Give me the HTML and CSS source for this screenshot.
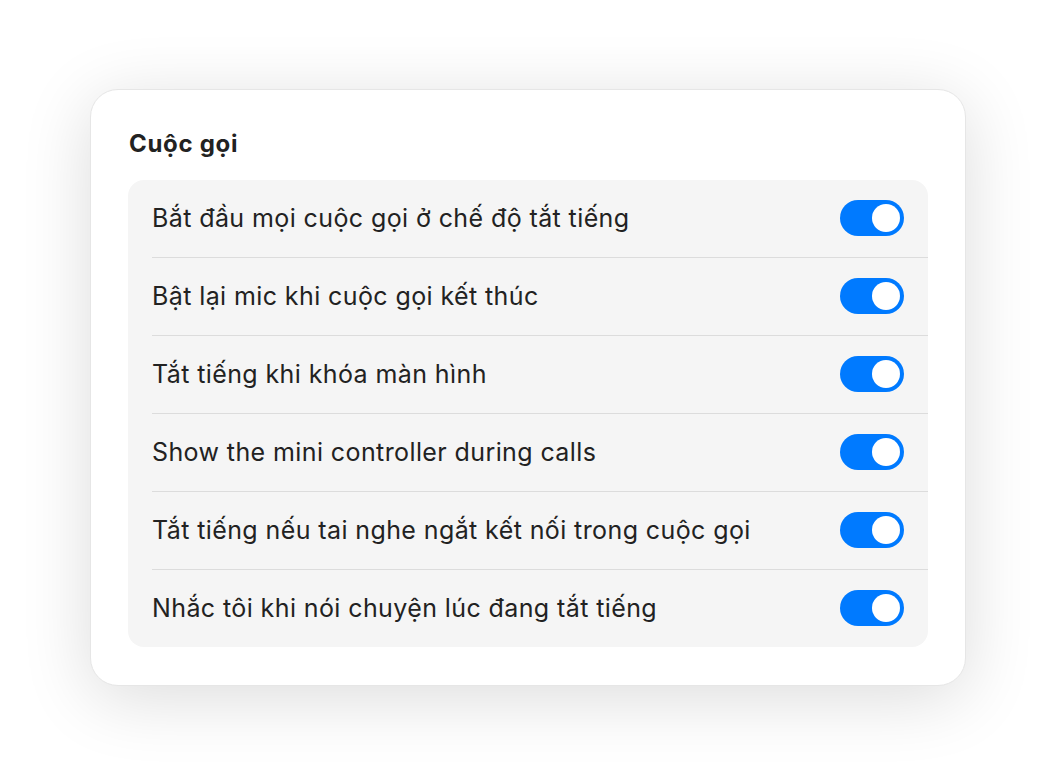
FILE: index.html
```html
<!DOCTYPE html>
<html lang="vi">
<head>
    <meta charset="UTF-8">
    <meta name="viewport" content="width=device-width, initial-scale=1.0">
    <title>Cuộc gọi</title>
    <link rel="stylesheet" href="styles.css">
</head>
<body>
    <div class="card">
        <h2>Cuộc gọi</h2>
        <div class="group">
            <label class="row">
                <span class="text">Bắt đầu mọi cuộc gọi ở chế độ tắt tiếng</span>
                <span class="switch"><input type="checkbox" checked><span class="slider-switch"></span></span>
            </label>
            <label class="row">
                <span class="text">Bật lại mic khi cuộc gọi kết thúc</span>
                <span class="switch"><input type="checkbox" checked><span class="slider-switch"></span></span>
            </label>
            <label class="row">
                <span class="text">Tắt tiếng khi khóa màn hình</span>
                <span class="switch"><input type="checkbox" checked><span class="slider-switch"></span></span>
            </label>
            <label class="row">
                <span class="text">Show the mini controller during calls</span>
                <span class="switch"><input type="checkbox" checked><span class="slider-switch"></span></span>
            </label>
            <label class="row">
                <span class="text">Tắt tiếng nếu tai nghe ngắt kết nối trong cuộc gọi</span>
                <span class="switch"><input type="checkbox" checked><span class="slider-switch"></span></span>
            </label>
            <label class="row">
                <span class="text">Nhắc tôi khi nói chuyện lúc đang tắt tiếng</span>
                <span class="switch"><input type="checkbox" checked><span class="slider-switch"></span></span>
            </label>
        </div>
    </div>
</body>
</html>
```

FILE: styles.css
```css
body {
    font-family: Inter, "Noto Sans", sans-serif;
    background-color: #fff;
    color: #222;
    display: flex;
    justify-content: center;
    align-items: center;
    height: 100vh;
    margin: 0;
}
.card {
    width: 800px;
    padding: 35px 37px 38px;
    background: #fff;
    border: 1px solid #e6e6e6;
    border-radius: 28px;
    box-shadow: 0 12px 70px rgba(0, 0, 0, 0.14);
}
h2 {
    margin: 0 0 17px 1px;
    font-size: 24px;
    font-weight: 700;
    line-height: 38px;
    letter-spacing: 0.7px;
    color: #222;
}
.group {
    background-color: #f5f5f5;
    border-radius: 16px;
}
.row {
    display: flex;
    align-items: center;
    justify-content: space-between;
    height: 77px;
    margin-left: 24px;
    padding-right: 24px;
    border-bottom: 1px solid #dcdcdc;
    cursor: pointer;
}
.row:last-child {
    border-bottom: none;
}
.text {
    font-size: 25px;
    letter-spacing: 0.4px;
}
/* toggle switch */
.switch {
    position: relative;
    display: inline-block;
    width: 64px;
    height: 36px;
}
.switch input {
    opacity: 0;
    width: 0;
    height: 0;
}
.slider-switch {
    position: absolute;
    top: 0;
    left: 0;
    right: 0;
    bottom: 0;
    background-color: #ccc;
    border-radius: 18px;
    transition: 0.2s;
}
.slider-switch:before {
    position: absolute;
    content: "";
    height: 28px;
    width: 28px;
    left: 4px;
    top: 4px;
    background-color: #fff;
    border-radius: 50%;
    transition: 0.2s;
}
input:checked + .slider-switch {
    background-color: #007aff;
}
input:checked + .slider-switch:before {
    transform: translateX(28px);
}
```
